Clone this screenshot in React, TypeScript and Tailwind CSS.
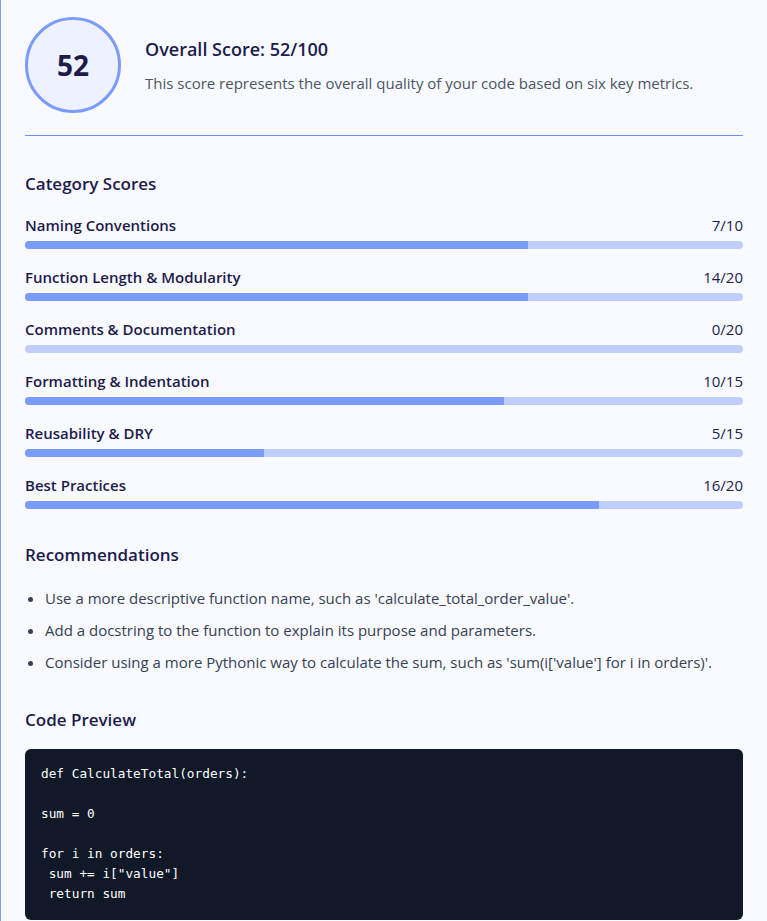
import React from 'react'

const categories = [
  { name: 'Naming Conventions', score: 7, max: 10 },
  { name: 'Function Length & Modularity', score: 14, max: 20 },
  { name: 'Comments & Documentation', score: 0, max: 20 },
  { name: 'Formatting & Indentation', score: 10, max: 15 },
  { name: 'Reusability & DRY', score: 5, max: 15 },
  { name: 'Best Practices', score: 16, max: 20 },
]

const recommendations = [
  "Use a more descriptive function name, such as 'calculate_total_order_value'.",
  'Add a docstring to the function to explain its purpose and parameters.',
  "Consider using a more Pythonic way to calculate the sum, such as 'sum(i['value'] for i in orders)'.",
]

const code = `def CalculateTotal(orders):

sum = 0

for i in orders:
 sum += i["value"]
 return sum`

export default function App() {
  return (
    <div className="min-h-screen bg-[#f8faff] border-l border-[#7b9cff] font-['Open_Sans',sans-serif] text-[#1e1b4b]">
      <div className="px-6 pt-[17px]">
        {/* Overall */}
        <div className="flex items-center gap-6">
          <div className="w-24 h-24 shrink-0 rounded-full border-[3px] border-[#7b9cff] bg-[#eef2ff] flex items-center justify-center text-[28px] font-bold">52</div>
          <div>
            <h1 className="text-[18px] leading-7 font-semibold">Overall Score: 52/100</h1>
            <p className="mt-2 text-[15px] leading-6 text-[#4b5563]">This score represents the overall quality of your code based on six key metrics.</p>
          </div>
        </div>

        <div className="mt-[22px] h-px bg-[#6d90ff]" />

        {/* Categories */}
        <h2 className="mt-[34px] text-[17px] leading-7 font-semibold">Category Scores</h2>
        <div className="mt-4">
          {categories.map(c => (
            <div key={c.name} className="mb-[17px]">
              <div className="flex justify-between text-[15px] leading-[22px]">
                <span className="font-semibold">{c.name}</span>
                <span>{c.score}/{c.max}</span>
              </div>
              <div className="mt-[5px] h-2 rounded-full bg-[#bfcefd] overflow-hidden">
                <div className="h-full bg-[#7b9cff]" style={{ width: `${(c.score / c.max) * 100}%` }} />
              </div>
            </div>
          ))}
        </div>

        {/* Recommendations */}
        <h2 className="mt-8 text-[17px] leading-7 font-semibold">Recommendations</h2>
        <ul className="mt-[17px] space-y-2 pl-5 list-disc marker:text-[#374151] text-[15px] leading-6 text-[#374151]">
          {recommendations.map(r => <li key={r}>{r}</li>)}
        </ul>

        {/* Code */}
        <h2 className="mt-8 text-[17px] leading-7 font-semibold">Code Preview</h2>
        <pre className="mt-[15px] rounded-md bg-[#111827] px-4 pt-[15px] pb-4 text-white font-['DejaVu_Sans_Mono',monospace] text-[12.75px] leading-5">{code}</pre>
      </div>
    </div>
  )
}
